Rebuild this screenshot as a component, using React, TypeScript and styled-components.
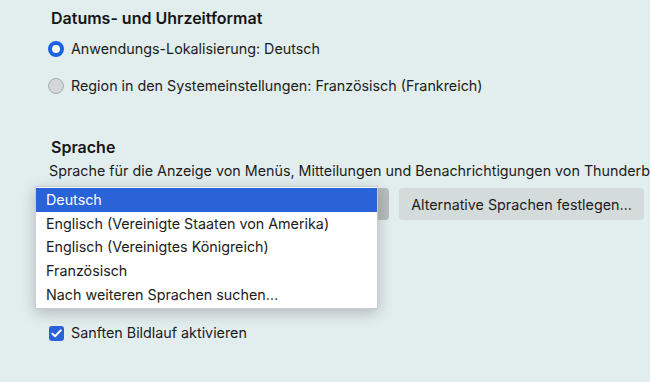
import styled, { createGlobalStyle } from "styled-components";

const GlobalStyle = createGlobalStyle`
	html, body {
		margin: 0;
		padding: 0;
		background: #e2eded;
	}
	body {
		font-family: "Inter", "Liberation Sans", sans-serif;
		color: #1c1c1c;
		-webkit-font-smoothing: antialiased;
	}
`;

const languages = [
	"Deutsch",
	"Englisch (Vereinigte Staaten von Amerika)",
	"Englisch (Vereinigtes Königreich)",
	"Französisch",
	"Nach weiteren Sprachen suchen…",
];

export default function App() {
	return (
		<>
			<GlobalStyle />
			<Page>
				<Section>
					<Heading>Datums- und Uhrzeitformat</Heading>
					<RadioRow>
						<Radio $checked />
						<Label>Anwendungs-Lokalisierung: Deutsch</Label>
					</RadioRow>
					<RadioRow>
						<Radio />
						<Label>Region in den Systemeinstellungen: Französisch (Frankreich)</Label>
					</RadioRow>
				</Section>

				<LanguageSection>
					<Heading>Sprache</Heading>
					<Description>
						Sprache für die Anzeige von Menüs, Mitteilungen und Benachrichtigungen von Thunderbird
					</Description>
					<ControlRow>
						<SelectButton />
						<Button>Alternative Sprachen festlegen…</Button>
						<Popup>
							{languages.map((lang, i) => (
								<Option key={lang} $active={i === 0}>
									{lang}
								</Option>
							))}
						</Popup>
					</ControlRow>
				</LanguageSection>

				<CheckRow>
					<Checkbox>
						<svg width="11" height="9" viewBox="0 0 11 9">
							<path d="M1.3 4.6 L4.1 7.3 L9.7 1.4" fill="none" stroke="#fff" strokeWidth="2" strokeLinecap="round" strokeLinejoin="round" />
						</svg>
					</Checkbox>
					<Label>Sanften Bildlauf aktivieren</Label>
				</CheckRow>
			</Page>
		</>
	);
}

const Page = styled.div`
	width: 650px;
	height: 382px;
	overflow: hidden;
	padding: 8px 0 0 35px;
	box-sizing: border-box;
`;

const Section = styled.div`
	display: flex;
	flex-direction: column;
	padding-left: 13px;
`;

const Heading = styled.h2`
	margin: 0 0 0 3px;
	font-size: 16px;
	font-weight: 600;
	line-height: 20px;
	color: #161616;
`;

const RadioRow = styled.div`
	display: flex;
	align-items: center;
	gap: 7px;
	height: 20px;
	margin-top: 11px;
	& + & {
		margin-top: 17px;
	}
`;

const Radio = styled.span<{ $checked?: boolean }>`
	width: 16px;
	height: 16px;
	border-radius: 50%;
	box-sizing: border-box;
	flex-shrink: 0;
	background: ${(p) => (p.$checked ? "#fff" : "#d3d7d7")};
	border: ${(p) => (p.$checked ? "4.5px solid #1b61e4" : "1px solid #a9aeae")};
`;

const Label = styled.span`
	font-size: 14.3px;
	line-height: 20px;
	white-space: nowrap;
`;

const LanguageSection = styled.div`
	display: flex;
	flex-direction: column;
	margin-top: 41px;
	padding-left: 13px;
`;

const Description = styled.p`
	margin: 4px 0 0 1px;
	font-size: 14.3px;
	line-height: 20px;
	white-space: nowrap;
`;

const ControlRow = styled.div`
	position: relative;
	display: flex;
	gap: 10px;
	margin: 7px 0 0 -12px;
	height: 32px;
`;

const SelectButton = styled.div`
	width: 353px;
	height: 32px;
	border-radius: 4px;
	background: #b7bdbd;
`;

const Button = styled.div`
	display: flex;
	align-items: center;
	justify-content: center;
	width: 245px;
	height: 32px;
	border-radius: 4px;
	background: #d4dbdb;
	font-size: 14.3px;
	white-space: nowrap;
`;

const Popup = styled.ul`
	position: absolute;
	left: -1px;
	top: -2px;
	width: 341px;
	margin: 0;
	padding: 1px 0 2px;
	list-style: none;
	background: #fff;
	border: 1px solid #c9cdcd;
	box-shadow: 0 4px 14px rgba(0, 0, 0, 0.22);
`;

const Option = styled.li<{ $active?: boolean }>`
	height: 23.6px;
	display: flex;
	align-items: center;
	padding-left: 10px;
	font-size: 14.3px;
	white-space: nowrap;
	background: ${(p) => (p.$active ? "#2a62d8" : "transparent")};
	color: ${(p) => (p.$active ? "#fff" : "#1c1c1c")};
`;

const CheckRow = styled.div`
	display: flex;
	align-items: center;
	gap: 7px;
	margin: 103px 0 0 14px;
	height: 20px;
`;

const Checkbox = styled.span`
	display: flex;
	align-items: center;
	justify-content: center;
	width: 15px;
	height: 15px;
	border-radius: 3px;
	background: #2a62d8;
	flex-shrink: 0;
`;
